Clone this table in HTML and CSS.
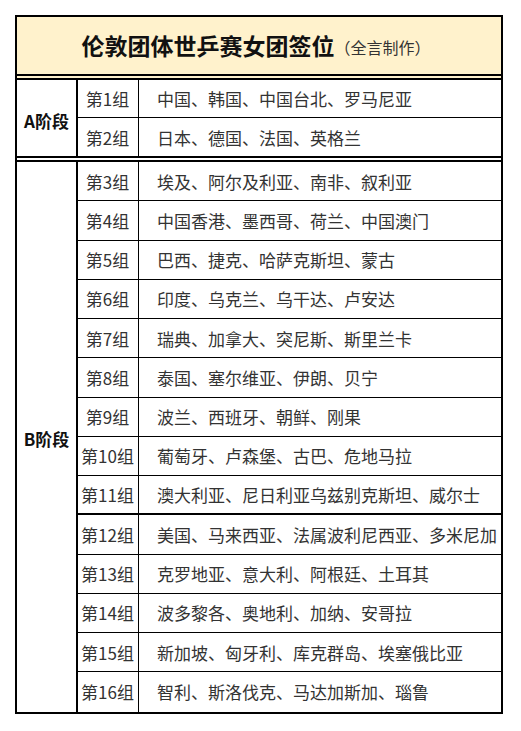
FILE: index.html
```html
<!DOCTYPE html>
<html lang="zh-CN">
<head>
<meta charset="utf-8">
<title>伦敦团体世乒赛女团签位</title>
<link rel="stylesheet" href="styles.css">
</head>
<body>
<div class="sheet">
  <div class="header">
    <span class="title">伦敦团体世乒赛女团签位</span><span class="sub">（全言制作）</span>
  </div>
  <div class="section sec-a">
    <div class="stage">A阶段</div>
    <div class="grp">第1组</div><div class="cty">中国、韩国、中国台北、罗马尼亚</div>
    <div class="grp last">第2组</div><div class="cty last">日本、德国、法国、英格兰</div>
  </div>
  <div class="section sec-b">
    <div class="stage">B阶段</div>
    <div class="grp">第3组</div><div class="cty">埃及、阿尔及利亚、南非、叙利亚</div>
    <div class="grp">第4组</div><div class="cty">中国香港、墨西哥、荷兰、中国澳门</div>
    <div class="grp">第5组</div><div class="cty">巴西、捷克、哈萨克斯坦、蒙古</div>
    <div class="grp">第6组</div><div class="cty">印度、乌克兰、乌干达、卢安达</div>
    <div class="grp">第7组</div><div class="cty">瑞典、加拿大、突尼斯、斯里兰卡</div>
    <div class="grp">第8组</div><div class="cty">泰国、塞尔维亚、伊朗、贝宁</div>
    <div class="grp">第9组</div><div class="cty">波兰、西班牙、朝鲜、刚果</div>
    <div class="grp">第10组</div><div class="cty">葡萄牙、卢森堡、古巴、危地马拉</div>
    <div class="grp thick">第11组</div><div class="cty thick">澳大利亚、尼日利亚乌兹别克斯坦、威尔士</div>
    <div class="grp">第12组</div><div class="cty">美国、马来西亚、法属波利尼西亚、多米尼加</div>
    <div class="grp">第13组</div><div class="cty">克罗地亚、意大利、阿根廷、土耳其</div>
    <div class="grp">第14组</div><div class="cty">波多黎各、奥地利、加纳、安哥拉</div>
    <div class="grp">第15组</div><div class="cty">新加坡、匈牙利、库克群岛、埃塞俄比亚</div>
    <div class="grp last">第16组</div><div class="cty last">智利、斯洛伐克、马达加斯加、瑙鲁</div>
  </div>
</div>
</body>
</html>
```
FILE: styles.css
```css
* { box-sizing: border-box; }
html, body { margin: 0; padding: 0; background: #fff; }
body {
  font-family: "Noto Sans CJK SC", "Noto Sans", sans-serif;
  color: #333;
}
.sheet {
  margin: 15px 0 0 15px;
  width: 488px;
  border: 2px solid #000;
}
.header {
  height: 63px;
  background: #fff2cc;
  border-bottom: 6px double #000;
  display: flex;
  align-items: center;
  justify-content: center;
  padding-right: 6px;
}
.title {
  font-size: 23px;
  font-weight: 700;
  color: #111;
  line-height: 1;
}
.sub {
  font-size: 16px;
  color: #333;
  line-height: 1;
  margin-top: 3px;
}
.section {
  display: grid;
  grid-template-columns: 61px 61px 1fr;
}
.sec-a {
  grid-template-rows: 38px 38px;
  border-bottom: 6px double #000;
}
.sec-b {
  grid-template-rows: repeat(14, 39.25px);
}
.stage {
  grid-column: 1;
  grid-row: 1 / -1;
  border-right: 2px solid #000;
  display: flex;
  align-items: center;
  justify-content: center;
  font-size: 17px;
  font-weight: 700;
  color: #111;
  padding-top: 4px;
}
.grp, .cty {
  border-bottom: 1px solid #000;
  display: flex;
  align-items: center;
  font-size: 17px;
  line-height: 1;
  white-space: nowrap;
}
.grp {
  grid-column: 2;
  border-right: 1px solid #000;
  justify-content: center;
  padding-right: 1px;
}
.cty {
  grid-column: 3;
  padding-left: 18px;
  overflow: hidden;
}
.grp.thick, .cty.thick { border-bottom-width: 2px; }
.grp.last, .cty.last { border-bottom: none; }
```
